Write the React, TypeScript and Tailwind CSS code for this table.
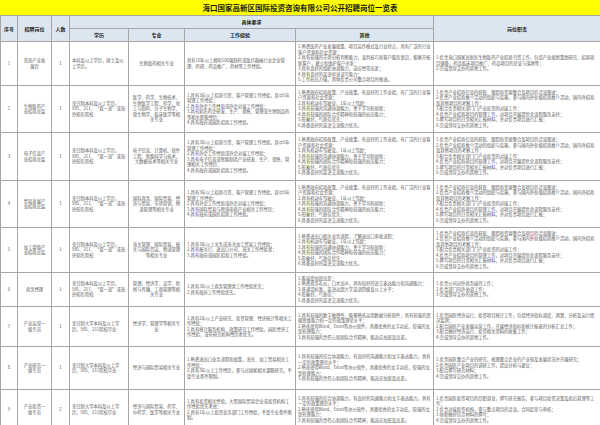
const ff = { fontFamily: '"Noto Sans CJK SC", "Noto Sans", sans-serif' };

type Row = {
  no: string;
  post: string;
  num: string;
  edu: string;
  major: string;
  exp: string[];
  other: string[];
  duty: string[];
  h: string;
};

const eduA = "全日制本科及以上学历，985、211、“双一流”或海外知名院校";
const eduB = "全日制大学本科及以上学历，985、211院校毕业";

const otherA = [
  "1.熟悉政府招商政策、产业政策，有良好的工作业绩，有广泛的行业客户资源和社会资源；",
  "2.具有机动车驾驶证，1年以上驾龄；",
  "3.具有较强的沟通协调能力，善于学习和创新；",
  "4.具有较强的团队合作精神和较强的抗压能力；",
  "5.形象好，气质佳优先；",
  "6.具备良好的英语交流能力优先。",
];

const dutyA = [
  "1.负责产业招商信息的获取、跟踪和资源整合及项目的洽谈跟进；",
  "2.负责产业招商推介活动的组织与实施，参与国内外各级招商推介活动，国内外招商及其他项目的考察工作；",
  "3.配合负责相关部门门产业投资的对接工作；",
  "4.负责产业招商项目的管理工作，对项目开展提供全流程服务支持；",
  "5.撰写项目的日常相关汇报材料，并对负责项目进行汇报；",
  "6.完成领导交办的其他工作。",
];

const expA = (field: string) => [
  "1.具有3年以上招商引资、客户管理工作经验，其中5年管理工作经验；",
  "2.具有外企工作经验或外企对接工作经验；",
  `3.具有${field}研发、生产、销售、管理相关工作经历；`,
  "4.具有政府或园区招商工作经验。",
];

const rows: Row[] = [
  {
    no: "1",
    post: "首席产业发展官",
    num: "1",
    edu: "本科及以上学历，硕士及以上学历。",
    major: "生物医药相关专业",
    exp: ["具有10年以上拥有500强制药或医疗器械行业企业管理、药研、药品推广、药材等工作经验。"],
    other: [
      "1.熟悉医药产业发展政策、项目运作模式及行业特点，具有广泛的行业客户资源和社会资源；",
      "2.具有较强的市场分析判断能力，谈判技巧和客户服务意识，能够开拓新客户，建立和维护客户关系；",
      "3.具有良好的组织协调能力，适应经常出差；",
      "4.具有良好的英语听说读写能力；",
      "5.工作抗压力强，具体负责公司重点项目的推进。",
    ],
    duty: [
      "1.负责海口国家高新区生物医药产业招商引资工作，包括产业规划策划研究、招商项目储备，药品临床项目推广、药品项目的论证与落地等；",
      "2.完成领导交办的其他工作。",
    ],
    h: "h-[44px]",
  },
  {
    no: "2",
    post: "生物医药产业招商总监",
    num: "1",
    edu: eduA,
    major: "医学、药学、生物技术、生物医学工程、药学、化工与制药、分子生物学、微生物学、临床医学等相关专业",
    exp: [
      "1.具有3年以上招商引资、客户管理工作经验，其中5年管理工作经验；",
      "2.具有外企工作经验或外企对接工作经验；",
      "3.具有知名药企研发、生产、销售、管理或生物制品药等相关职能经历；",
      "4.具有政府或园区招商工作经验。",
    ],
    other: otherA,
    duty: dutyA,
    h: "h-[47px]",
  },
  {
    no: "3",
    post: "电子信息产业招商总监",
    num: "1",
    edu: eduA,
    major: "电子信息、计算机、软件工程、智能科学与技术、大数据技术等相关专业",
    exp: expA("电子信息或智能制造产业"),
    other: otherA,
    duty: dutyA,
    h: "h-[48px]",
  },
  {
    no: "4",
    post: "贸易发展产业招商总监",
    num: "1",
    edu: eduA,
    major: "国际商务、国际贸易、经济与贸易、市场营销、物流管理等相关专业",
    exp: [
      "1.具有3年以上招商引资、客户管理工作经验，其中5年管理工作经验；",
      "2.具有外企工作经验或外企对接工作经验；",
      "3.具有国际贸易与跨境电商产业相关工作经历；",
      "4.具有政府或园区招商工作经验。",
    ],
    other: otherA,
    duty: dutyA,
    h: "h-[47px]",
  },
  {
    no: "5",
    post: "加工增值产业招商总监",
    num: "1",
    edu: eduA,
    major: "海关管理、国际贸易、报关与国际货运、物流管理等相关专业",
    exp: [
      "1.具有3年以上关务或海关加工贸易工作经验；",
      "2.具有报关行、进出口公司、海关工作经验者；",
      "3.具有政府或园区招商工作经验。",
    ],
    other: [
      "1.熟悉进出口相关业务流程，了解进出口审批流程；",
      "2.具有机动车驾驶证，1年以上驾龄；",
      "3.具有较强的沟通协调能力，善于学习和创新；",
      "4.具有较强的团队合作精神和较强的抗压能力；",
      "5.形象好，气质佳优先；",
      "6.具备良好的英语交流能力优先。",
    ],
    duty: dutyA,
    h: "h-[45px]",
  },
  {
    no: "6",
    post: "商务经理",
    num: "1",
    edu: eduA,
    major: "管理、经济学、法学、新闻与传播、工商管理等相关专业",
    exp: ["1.具有3年以上商务管理类工作经验优先；", "2.具有政府工作经验优先。"],
    other: [
      "1.能接受加班出差；",
      "2.熟悉商务礼仪，口才出众，具有较好的语言表达能力和沟通能力；",
      "3.普通话标准，英语达到大学英语四级及以上水平；",
      "4.形象好，气质佳；",
      "5.具备良好的英语交流能力优先。",
    ],
    duty: ["1.负责公司对外商务接待工作；", "2.负责部门内外协调工作；", "3.完成领导交办的其他工作。"],
    h: "h-[34px]",
  },
  {
    no: "7",
    post: "产业运营一级专员",
    num: "1",
    edu: eduB,
    major: "经济学、管理学等相关专业",
    exp: [
      "1.具有2年以上产业研究、投资管理、经济统计等相关工作经验；",
      "2.具有统计服务机构、政策研究工作经验，园区经济工作经验，或有研究机构经历者优先。",
    ],
    other: [
      "1.具有较强的数字敏感性，能够熟练运用数据分析软件，具有较强的逻辑思维能力和一定的政策理论水平；",
      "2.熟练使用Word、Excel等办公软件，具备优秀的文字功底，较强的文案处理能力；",
      "3.具有较强的责任心和团队合作精神，能适应加班及出差。",
    ],
    duty: [
      "1.负责园区经济运行、投资项目统计工作，包括经济指标调度、测算、分析及运行情况监测；",
      "2.配合园区产业发展运营工作，开展经济指标和统计报表的分析汇总工作；",
      "3.配合做好经济运行、投资相关资料的收集工作；",
      "4.完成领导交办的其他工作。",
    ],
    h: "h-[40px]",
  },
  {
    no: "8",
    post: "产业研究一级专员",
    num: "1",
    edu: eduB,
    major: "经济与国际贸易相关专业",
    exp: [
      "1.熟悉进出口业务流程和政策，海关、加工贸易相关工作经验；",
      "2.具有3年以上工作经历，参与过国家相关课题研究，不受专业条件限制。",
    ],
    other: [
      "1.具有较强的综合协调能力，有良好的沟通能力和文字表达能力，具有一定的政策理论水平；",
      "2.熟练使用Word、Excel等办公软件，具备优秀的文字功底，较强的文案处理能力；",
      "3.具有较强的责任心和团队合作精神，能适应加班及出差。",
    ],
    duty: [
      "1.负责园区重点产业的研究，梳理重点企业的产业链及发展状况并开展研究；",
      "2.负责园区产业项目的调研工作，提出分析与建议；",
      "3.配合撰写研究材料；",
      "4.完成领导交办的其他工作。",
    ],
    h: "h-[43px]",
  },
  {
    no: "9",
    post: "产业投资一级专员",
    num: "2",
    edu: eduB,
    major: "经济与国际贸易、药学、中药学、医学等相关专业",
    exp: [
      "1.具有投资相关经验，大型国际贸易企业或投资机构工作经验优先考虑；",
      "2.具有1年以上投资业务部门工作经验，不受专业条件限制。",
    ],
    other: [
      "1.具有较强的综合协调能力，有良好的沟通能力和文字表达能力，具有一定的政策理论水平；",
      "2.熟练使用Word、Excel等办公软件，具备优秀的文字功底，较强的文案处理能力；",
      "3.具有较强的责任心和团队合作精神，能适应加班及出差。",
    ],
    duty: [
      "1.负责园区投资项目的尽职调查，撰写研究报告，参与项目投资决策及投后管理等工作；",
      "2.负责对接投资机构，参与重点项目的洽谈，合同起草与审核；",
      "3.协助做好综合材料的撰写；",
      "4.完成领导交办的其他工作。",
    ],
    h: "h-[40px]",
  },
];

const cell = "border border-[#a6a6a6] px-[2px] align-middle";

function Lines({ items }: { items: string[] }) {
  return (
    <div className="flex flex-col">
      {items.map((t, i) => (
        <span key={i}>{t}</span>
      ))}
    </div>
  );
}

export default function App() {
  return (
    <div className="w-[600px] h-[425px] overflow-hidden bg-white text-[#5a5a5a]" style={ff}>
      <div className="h-[15px] bg-[#ffff00] flex items-center justify-center">
        <span className="text-[7.5px] font-bold leading-none text-[#1a1a1a]">
          海口国家高新区国际投资咨询有限公司公开招聘岗位一览表
        </span>
      </div>
      <table className="w-[600px] table-fixed border-collapse text-[4.3px] leading-[5.5px]">
        <colgroup>
          <col className="w-[17px]" />
          <col className="w-[34px]" />
          <col className="w-[18px]" />
          <col className="w-[59px]" />
          <col className="w-[56px]" />
          <col className="w-[111px]" />
          <col className="w-[138px]" />
          <col className="w-[167px]" />
        </colgroup>
        <thead className="bg-[#dce6f1] text-[#222] font-bold text-[5px]">
          <tr className="h-[13px]">
            <th rowSpan={2} className={cell + " text-center"}>序号</th>
            <th rowSpan={2} className={cell + " text-center"}>招聘岗位</th>
            <th rowSpan={2} className={cell + " text-center"}>人数</th>
            <th colSpan={4} className={cell + " text-center"}>具体要求</th>
            <th rowSpan={2} className={cell + " text-center"}>岗位职责</th>
          </tr>
          <tr className="h-[13px]">
            <th className={cell + " text-center"}>学历</th>
            <th className={cell + " text-center"}>专业</th>
            <th className={cell + " text-center"}>工作经验</th>
            <th className={cell + " text-center"}>其他</th>
          </tr>
        </thead>
        <tbody>
          {rows.map((r) => (
            <tr key={r.no} className={r.h}>
              <td className={cell + " text-center"}>{r.no}</td>
              <td className={cell + " text-center px-[5px]"}>{r.post}</td>
              <td className={cell + " text-center"}>{r.num}</td>
              <td className={cell}>{r.edu}</td>
              <td className={cell + " text-center"}>{r.major}</td>
              <td className={cell}>
                <Lines items={r.exp} />
              </td>
              <td className={cell}>
                <Lines items={r.other} />
              </td>
              <td className={cell}>
                <Lines items={r.duty} />
              </td>
            </tr>
          ))}
        </tbody>
      </table>
    </div>
  );
}
